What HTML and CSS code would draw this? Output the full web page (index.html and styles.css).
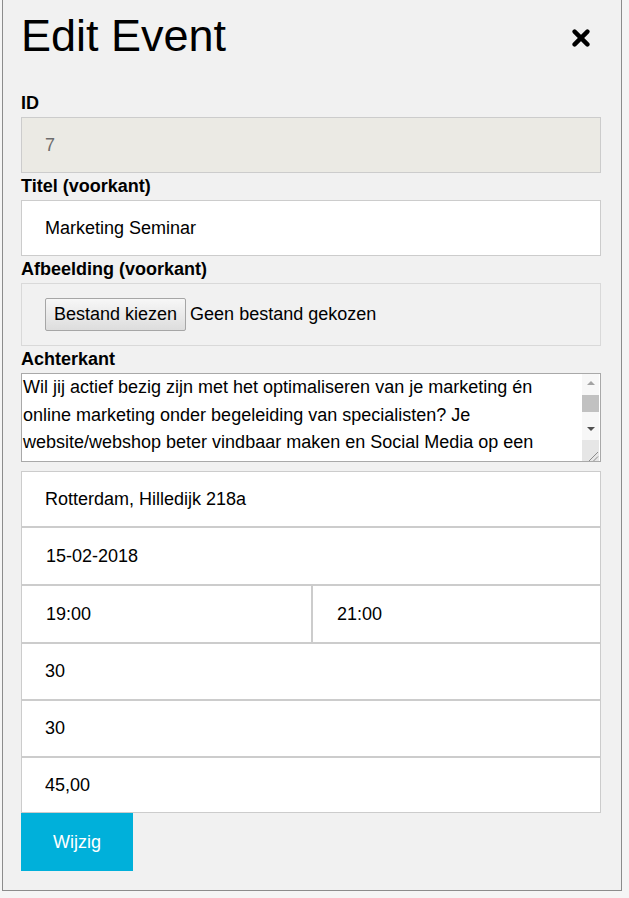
FILE: index.html
```html
<!DOCTYPE html>
<html lang="nl">
<head>
<meta charset="utf-8">
<title>Edit Event</title>
<link rel="stylesheet" href="styles.css">
</head>
<body>
<div class="modal">
  <div class="header">
    <h1 class="title">Edit Event</h1>
    <span class="close" aria-label="Sluiten">
      <svg width="18" height="18" viewBox="0 0 18 18"><path d="M2.6 2.6 L15.4 15.4 M15.4 2.6 L2.6 15.4" stroke="#000" stroke-width="4.4" stroke-linecap="round" fill="none"/></svg>
    </span>
  </div>
  <form class="form">
    <label class="lbl lbl-first">ID</label>
    <input class="field field-disabled" type="text" value="7" disabled>
    <label class="lbl">Titel (voorkant)</label>
    <input class="field" type="text" value="Marketing Seminar">
    <label class="lbl">Afbeelding (voorkant)</label>
    <div class="filebox">
      <button type="button" class="filebtn">Bestand kiezen</button>
      <span class="filetext">Geen bestand gekozen</span>
    </div>
    <label class="lbl">Achterkant</label>
    <div class="areabox">
      <textarea class="area">Wil jij actief bezig zijn met het optimaliseren van je marketing én online marketing onder begeleiding van specialisten? Je website/webshop beter vindbaar maken en Social Media op een effectieve manier inzetten? Kom dan naar het Marketing Seminar en ontdek hoe je met de juiste strategie meer klanten bereikt.</textarea>
      <div class="sbar" aria-hidden="true">
        <div class="sbtn"><span class="arrow-up"></span></div>
        <div class="strack"><div class="sthumb"></div></div>
        <div class="sbtn"><span class="arrow-down"></span></div>
        <div class="sgap"></div>
        <div class="sresize">
          <svg width="17" height="21" viewBox="0 0 17 21"><path d="M16 12 L7 21 M16 16.5 L11.5 21" stroke="#8c8c8c" stroke-width="1" fill="none"/></svg>
        </div>
      </div>
    </div>
    <div class="stack">
      <input class="field field-h56" type="text" value="Rotterdam, Hilledijk 218a">
      <input class="field field-h58 field-date" type="text" value="15-02-2018">
      <div class="row">
        <input class="field field-h58 field-date field-start" type="text" value="19:00">
        <input class="field field-h58 field-date field-end" type="text" value="21:00">
      </div>
      <input class="field field-h57" type="text" value="30">
      <input class="field field-h57" type="text" value="30">
      <input class="field field-h56" type="text" value="45,00">
    </div>
    <button type="button" class="submit">Wijzig</button>
  </form>
</div>
</body>
</html>
```

FILE: styles.css
```css
html, body {
  margin: 0;
  padding: 0;
}
body {
  background: #f5f5f5;
  font-family: "Liberation Sans", Arial, sans-serif;
  color: #000;
  width: 629px;
  height: 898px;
  overflow: hidden;
}
.modal {
  margin-left: 2px;
  width: 620px;
  box-sizing: border-box;
  background: #f1f1f1;
  border: 1px solid #8c8c8c;
  border-top: none;
  padding: 0 20px 19px 18px;
}
.header {
  display: flex;
  justify-content: space-between;
  align-items: flex-start;
  padding-top: 10px;
}
.title {
  margin: 0;
  font-size: 45px;
  font-weight: normal;
  line-height: 52px;
}
.close {
  display: block;
  width: 18px;
  height: 18px;
  margin-top: 19px;
  margin-right: 11px;
}
.close svg {
  display: block;
}
.form {
  display: block;
}
.lbl {
  display: block;
  font-size: 18px;
  font-weight: bold;
  line-height: 21px;
  margin: 3px 0 3px;
}
.lbl-first {
  margin-top: 31px;
}
.field {
  display: block;
  width: 100%;
  box-sizing: border-box;
  height: 56px;
  margin: 0;
  padding: 0 23px;
  border: 1px solid #cccccc;
  border-radius: 0;
  background: #fff;
  font-family: "Liberation Sans", Arial, sans-serif;
  font-size: 18px;
  color: #000;
  outline: none;
}
.field-disabled {
  background: #ebeae4;
  color: #6d6d6d;
  -webkit-text-fill-color: #6d6d6d;
  opacity: 1;
}
.filebox {
  box-sizing: border-box;
  height: 63px;
  border: 1px solid #d9d9d9;
  padding: 14px 23px 0;
  display: flex;
  align-items: flex-start;
  gap: 4px;
}
.filebtn {
  box-sizing: border-box;
  height: 33px;
  padding: 0 8px;
  margin: 0;
  border: 1px solid #a6a6a6;
  border-radius: 2px;
  background: linear-gradient(#f7f7f7, #dddddd);
  font-family: "Liberation Sans", Arial, sans-serif;
  font-size: 18px;
  color: #000;
  line-height: 31px;
}
.filetext {
  font-size: 18px;
  line-height: 33px;
}
.areabox {
  display: flex;
  box-sizing: border-box;
  height: 89px;
  border: 1px solid #a9a9a9;
  background: #fff;
}
.area {
  flex: 1;
  min-width: 0;
  height: 100%;
  box-sizing: border-box;
  margin: 0;
  padding: 0 2px 0 1px;
  border: none;
  background: #fff;
  font-family: "Liberation Sans", Arial, sans-serif;
  font-size: 18px;
  line-height: 27.5px;
  color: #000;
  resize: none;
  overflow: hidden;
  outline: none;
}
.sbar {
  width: 17px;
  margin-right: 1px;
  display: flex;
  flex-direction: column;
  background: #f7f7f7;
}
.sbtn {
  height: 17px;
  display: flex;
  align-items: center;
  justify-content: center;
}
.arrow-up {
  width: 0;
  height: 0;
  border-left: 4px solid transparent;
  border-right: 4px solid transparent;
  border-bottom: 4px solid #a3a3a3;
}
.arrow-down {
  width: 0;
  height: 0;
  border-left: 4px solid transparent;
  border-right: 4px solid transparent;
  border-top: 4px solid #505050;
}
.strack {
  height: 29px;
  padding-top: 4px;
  box-sizing: border-box;
}
.sthumb {
  height: 17px;
  background: #c1c1c1;
}
.sgap {
  height: 3px;
}
.sresize {
  height: 21px;
  background: #e6e6e6;
}
.sresize svg {
  display: block;
}
.stack {
  margin-top: 9px;
  display: flex;
  flex-direction: column;
}
.field-h56 {
  height: 56px;
}
.field-h57 {
  height: 57px;
}
.field-h58 {
  height: 58px;
}
.field-date {
  padding-left: 24px;
}
.row {
  display: flex;
}
.field-start {
  width: 291px;
  flex: none;
}
.field-end {
  flex: 1;
  width: auto;
  min-width: 0;
}
.submit {
  display: block;
  width: 112px;
  height: 58px;
  margin: 0;
  padding: 0;
  border: none;
  border-radius: 0;
  background: #00b0da;
  color: #fff;
  font-family: "Liberation Sans", Arial, sans-serif;
  font-size: 18px;
}
```
